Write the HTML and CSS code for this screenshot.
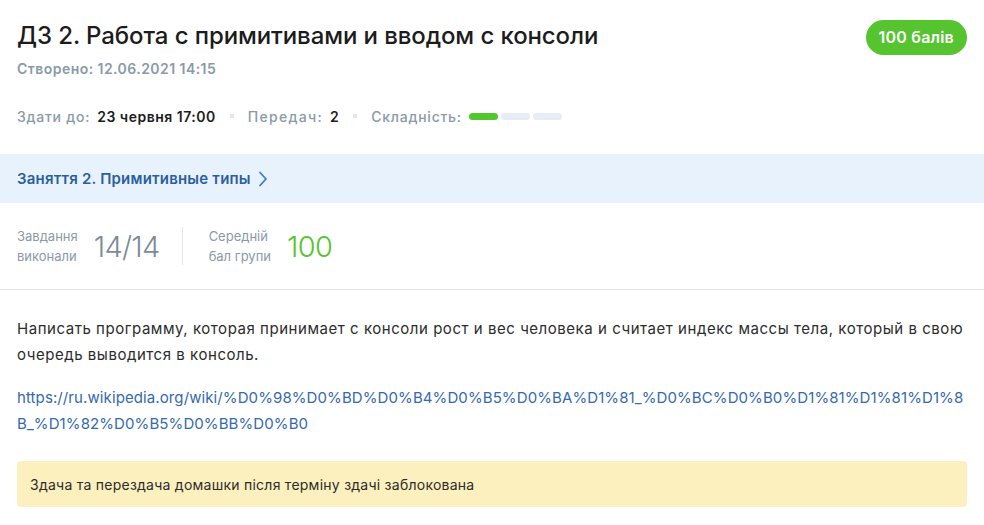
FILE: index.html
```html
<!DOCTYPE html>
<html lang="uk">
<head>
<meta charset="utf-8">
<link rel="stylesheet" href="styles.css">
</head>
<body>
<div class="page">
  <header class="head">
    <div class="head-main">
      <h1 class="title">ДЗ 2. Работа с примитивами и вводом с консоли</h1>
      <div class="created">Створено: 12.06.2021 14:15</div>
    </div>
    <div class="badge">100 балів</div>
  </header>
  <div class="meta">
    <span class="meta-label">Здати до:</span><span class="meta-value">23 червня 17:00</span>
    <span class="dot"></span>
    <span class="meta-label wide">Передач:</span><span class="meta-value">2</span>
    <span class="dot"></span>
    <span class="meta-label">Складність:</span>
    <span class="bars"><span class="bar on"></span><span class="bar"></span><span class="bar"></span></span>
  </div>
  <a class="lesson" href="#">Заняття 2. Примитивные типы
    <svg class="chev" width="10" height="16" viewBox="0 0 10 16"><path d="M2 1.5 L8 8 L2 14.5" fill="none" stroke="#3b7dd0" stroke-width="1.8" stroke-linecap="round" stroke-linejoin="round"/></svg>
  </a>
  <div class="stats">
    <div class="stat">
      <div class="stat-label">Завдання<br>виконали</div>
      <div class="stat-num">14/14</div>
    </div>
    <div class="sep"></div>
    <div class="stat">
      <div class="stat-label">Середній<br>бал групи</div>
      <div class="stat-num green">100</div>
    </div>
  </div>
  <div class="content">
    <p class="text">Написать программу, которая принимает с консоли рост и вес человека и считает индекс массы тела, который в свою очередь выводится в консоль.</p>
    <p class="text url"><a class="link" href="#">https://ru.wikipedia.org/wiki/%D0%98%D0%BD%D0%B4%D0%B5%D0%BA%D1%81_%D0%BC%D0%B0%D1%81%D1%81%D1%8B_%D1%82%D0%B5%D0%BB%D0%B0</a></p>
    <div class="alert">Здача та перездача домашки після терміну здачі заблокована</div>
  </div>
</div>
</body>
</html>
```
FILE: styles.css
```css
* { box-sizing: border-box; }
html, body { margin: 0; padding: 0; background: #fff; }
body { font-family: "Inter", "Noto Sans", sans-serif; color: #222; }
.page { width: 984px; }
.head { display: flex; justify-content: space-between; align-items: flex-start; padding: 20px 17px 0 17px; }
.title { margin: 0; font-size: 24px; line-height: 32px; font-weight: 500; color: #1c1c1c; letter-spacing: -0.1px; }
.created { margin-top: 8px; font-size: 14px; line-height: 18px; font-weight: 600; color: #8a9aa7; letter-spacing: 0.45px; }
.badge { background: #55c42f; color: #fff; font-size: 16px; font-weight: 600; height: 35px; line-height: 35px; padding: 0 13px; border-radius: 18px; letter-spacing: 0.2px; }
.meta { display: flex; align-items: center; padding: 0 17px; margin-top: 27px; height: 22px; font-size: 14px; letter-spacing: 0.5px; }
.meta-label { color: #8a9aa7; font-weight: 500; margin-right: 7px; letter-spacing: 0.75px; }
.meta-label.wide { letter-spacing: 1.3px; }
.meta-value { color: #1c1c1c; font-weight: 600; }
.dot { width: 4px; height: 4px; background: #e3e7eb; margin: 0 14px; }
.bars { display: flex; gap: 3px; }
.bar { width: 29px; height: 7px; border-radius: 4px; background: #e6edf4; }
.bar.on { background: #52c72c; }
.lesson { display: flex; align-items: center; gap: 7px; margin-top: 27px; height: 49px; background: #e8f2fc; padding: 0 17px; font-size: 15px; font-weight: 600; color: #2b5f9e; text-decoration: none; letter-spacing: 0.2px; }
.chev { margin-top: 1px; }
.stats { display: flex; align-items: center; height: 87px; padding: 0 17px; border-bottom: 1px solid #e3e6e9; }
.stat { display: flex; align-items: center; gap: 16px; }
.stat-label { font-size: 13px; line-height: 20px; color: #8a9aa7; }
.stat-num { font-size: 29px; font-weight: 300; color: #7d8a97; letter-spacing: -0.7px; }
.stat-num.green { color: #55c42f; }
.sep { width: 1px; height: 38px; background: #e3e6e9; margin: 0 26px 0 22px; }
.content { padding: 26px 17px 0 17px; }
.text { margin: 0 0 17px 0; font-size: 15px; line-height: 26px; color: #2c2c2c; letter-spacing: 0.54px; }
.url { word-break: break-all; letter-spacing: 0.1px; }
.link { color: #3569b0; text-decoration: none; }
.alert { margin-top: 24px; background: #fdf0bf; border-radius: 4px; height: 46px; display: flex; align-items: center; padding: 0 13px; font-size: 14px; color: #2c2c2c; letter-spacing: 0.25px; }
```
